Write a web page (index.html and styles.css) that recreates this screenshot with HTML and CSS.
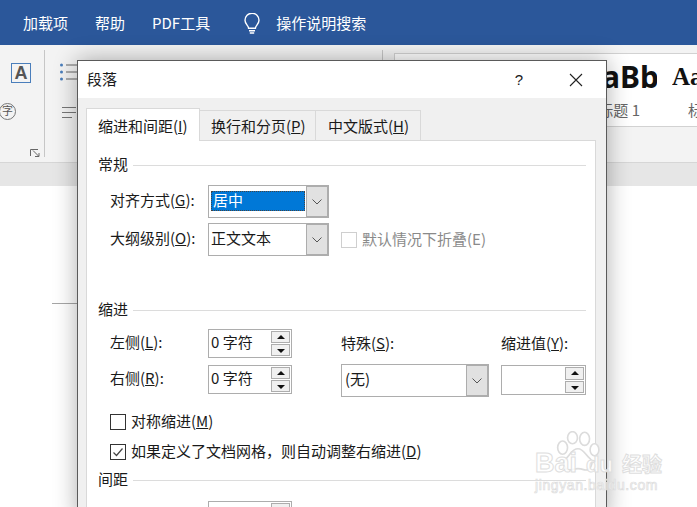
FILE: index.html
```html
<!DOCTYPE html>
<html lang="zh">
<head>
<meta charset="utf-8">
<title>段落</title>
<link rel="stylesheet" href="styles.css">
</head>
<body>
<div class="app">
  <header class="menubar">
    <span class="menu m1">加载项</span>
    <span class="menu m2">帮助</span>
    <span class="menu m3">PDF工具</span>
    <svg class="bulb" width="18" height="22" viewBox="0 0 18 22" fill="none" stroke="#fff" stroke-width="1.4"><path d="M5.6 15.2c0-2.6-3.6-4-3.6-8A7 7 0 0 1 16 7.2c0 4-3.6 5.400-3.600 8z"/><path d="M6 17.700h6M6.800 20h4.400"/></svg>
    <span class="menu m4">操作说明搜索</span>
  </header>
  <section class="ribbon">
    <div class="rib-col1">
      <span class="a-box">A</span>
      <span class="zi">字</span>
      <svg class="launcher" width="10" height="8" viewBox="0 0 10 8" fill="none" stroke="#666"><path d="M.5 7V.5H8"/><path d="M3 1.500L8.500 7M9 4v3.500H5"/></svg>
    </div>
    <div class="rib-sep"></div>
    <div class="rib-col2">
      <svg class="bullets" width="24" height="20" viewBox="0 0 24 20"><g fill="#4a7ebb"><circle cx="1.500" cy="3" r="1.500"/><circle cx="1.500" cy="10" r="1.500"/><circle cx="1.500" cy="17" r="1.500"/></g><path d="M6 3h18M6 10h18M6 17h18" stroke="#666"/></svg>
      <svg class="align" width="14" height="11" viewBox="0 0 14 11"><path d="M0 .5h14M0 5.500h14M0 10.500h10" stroke="#777"/></svg>
    </div>
    <div class="rib-sep"></div>
    <div class="gallery">
      <div class="style-item first"><span class="big">AaBb</span><span class="cap">标题 1</span></div>
      <div class="style-item second"><span class="big serif">AaBbC</span><span class="cap">标题</span></div>
    </div>
  </section>
  <div class="docband"></div>
  <main class="doc"><div class="mark"></div></main>

  <div class="dialog">
    <div class="dlg-title">
      <span class="dlg-name">段落</span>
      <span class="help">?</span>
      <svg class="close" width="14" height="14" viewBox="0 0 14 14" stroke="#222" stroke-width="1.100"><path d="M1 1l12 12M13 1L1 13"/></svg>
    </div>
    <div class="dlg-body">
      <div class="tabs">
        <span class="tab active">缩进和间距(<u>I</u>)</span>
        <span class="tab t2">换行和分页(<u>P</u>)</span>
        <span class="tab t3">中文版式(<u>H</u>)</span>
      </div>
      <div class="panel">
        <div class="heading"><span>常规</span><i></i></div>
        <div class="general">
          <label>对齐方式(<u>G</u>):</label>
          <div class="combo w121"><span class="value"><span class="selected">居中</span></span><span class="drop"><svg width="10" height="6" viewBox="0 0 10 6" fill="none" stroke="#555"><path d="M.5.500L5 5 9.500.500"/></svg></span></div>
          <span></span>
          <label>大纲级别(<u>O</u>):</label>
          <div class="combo w121"><span class="value"><span>正文文本</span></span><span class="drop"><svg width="10" height="6" viewBox="0 0 10 6" fill="none" stroke="#555"><path d="M.5.500L5 5 9.500.500"/></svg></span></div>
          <div class="check disabled"><span class="box"></span><span class="check-text">默认情况下折叠(E)</span></div>
        </div>
        <div class="heading h-indent"><span>缩进</span><i></i></div>
        <div class="indent">
          <div class="indent-left">
            <label>左侧(<u>L</u>):</label>
            <div class="spin"><span class="spin-val">0 字符</span><span class="btns"><b class="up"></b><b class="down"></b></span></div>
            <label>右侧(<u>R</u>):</label>
            <div class="spin"><span class="spin-val">0 字符</span><span class="btns"><b class="up"></b><b class="down"></b></span></div>
          </div>
          <div class="col-special">
            <label>特殊(<u>S</u>):</label>
            <div class="combo w148"><span class="value"><span>(无)</span></span><span class="drop"><svg width="10" height="6" viewBox="0 0 10 6" fill="none" stroke="#555"><path d="M.5.500L5 5 9.500.500"/></svg></span></div>
          </div>
          <div class="col-value">
            <label>缩进值(<u>Y</u>):</label>
            <div class="spin wide"><span class="spin-val"></span><span class="btns"><b class="up"></b><b class="down"></b></span></div>
          </div>
        </div>
        <div class="checks">
          <div class="check"><span class="box"></span><span class="check-text">对称缩进(<u>M</u>)</span></div>
          <div class="check"><span class="box"><svg width="14" height="14" viewBox="0 0 14 14" fill="none" stroke="#444" stroke-width="1.200"><path d="M2.500 7.500l3 3 6-7"/></svg></span><span class="check-text">如果定义了文档网格，则自动调整右缩进(<u>D</u>)</span></div>
        </div>
        <div class="heading h-space"><span>间距</span><i></i></div>
        <div class="spacing"><div class="spin"><span class="spin-val">0 行</span><span class="btns"><b class="up"></b><b class="down"></b></span></div></div>
      </div>
    </div>
  </div>

  <div class="watermark">
    <svg class="paw" width="44" height="42" viewBox="0 0 40 38" fill="#fff" stroke="#dcdcdc" stroke-width="1.500"><ellipse cx="6" cy="15" rx="4.500" ry="6"/><ellipse cx="15" cy="6" rx="4.500" ry="5.500"/><ellipse cx="26" cy="7" rx="4.500" ry="6"/><ellipse cx="35" cy="17" rx="4" ry="5.500"/><path d="M20 16c5 0 7 6 11 9 4 4 0 12-6 10-3-1-7-1-10 0-7 2-10-6-6-10 4-3 5-9 11-9z"/></svg>
    <div class="wm-main">Bai<span class="wm-du">du</span><span class="wm-cn">经验</span></div>
    <div class="wm-sub">jingyan.baidu.com</div>
  </div>
</div>
</body>
</html>
```
FILE: styles.css
```css
* { box-sizing: border-box; }
html, body { margin: 0; padding: 0; }
body { font-family: "Noto Sans CJK SC", "Noto Sans", sans-serif; font-size: 15px; color: #1a1a1a; background: #fff; }
.app { position: relative; width: 697px; height: 507px; overflow: hidden; display: flex; flex-direction: column; }
u { text-underline-offset: 1px; }
label { display: block; padding-bottom: 4px; }

.menubar { height: 45px; flex: none; background: #2b579a; color: #fff; display: flex; align-items: center; font-size: 15px; padding-left: 23px; }
.menu { line-height: 20px; }
.m2 { margin-left: 27px; }
.m3 { margin-left: 27px; }
.bulb { margin-left: 33px; margin-top: 2px; }
.m4 { margin-left: 15px; }

.ribbon { height: 118px; flex: none; background: #f3f3f3; border-bottom: 1px solid #d6d6d6; display: flex; }
.rib-col1 { position: relative; width: 44px; flex: none; }
.a-box { position: absolute; left: 11px; top: 18px; width: 20px; height: 20px; border: 1px solid #4a7ebb; color: #555; font: bold 18px/18px "Liberation Sans", sans-serif; text-align: center; }
.zi { position: absolute; left: -1px; top: 58px; width: 17px; height: 17px; border: 1px solid #777; border-radius: 50%; font-size: 11px; line-height: 13px; text-align: center; color: #555; }
.launcher { position: absolute; left: 30px; top: 104px; }
.rib-sep { width: 1px; margin-top: 5px; height: 107px; background: #c6c6c6; flex: none; }
.rib-col2 { position: relative; width: 337px; flex: none; }
.bullets { position: absolute; left: 15px; top: 17px; }
.align { position: absolute; left: 17px; top: 62px; }
.gallery { margin: 8px 0 0 11px; flex: 1; min-width: 0; height: 74px; background: #fff; border: 1px solid #d2d2d2; border-right: 0; display: flex; padding-left: 133px; overflow: hidden; }
.style-item { display: flex; flex-direction: column; overflow: hidden; flex: none; }
.first { width: 129px; align-items: flex-end; }
.second { margin-left: 15px; width: 60px; }
.big { font: bold 30px/40px "Noto Sans", sans-serif; color: #111; white-space: nowrap; margin: 3px -2px 0 0; height: 40px; }
.serif { font: bold 25px/40px "Liberation Serif", serif; margin-right: 0; }
.cap { font-size: 15px; line-height: 20px; color: #666; white-space: nowrap; margin-top: 3px; }
.first .cap { margin-right: 17px; }
.second .cap { margin-left: 16px; }

.docband { height: 23px; flex: none; background: #e6e6e6; }
.doc { flex: 1; background: #fff; position: relative; }
.mark { position: absolute; left: 52px; top: 117px; width: 26px; height: 1px; background: #a6a6a6; }

.dialog { position: absolute; left: 77px; top: 60px; width: 530px; height: 460px; background: #f0f0f0; border: 1px solid #5a5a5a; box-shadow: 0 0 22px rgba(0,0,0,.32); display: flex; flex-direction: column; }
.dlg-title { height: 37px; flex: none; background: #fff; display: flex; align-items: center; padding-left: 9px; }
.dlg-name { padding-bottom: 3px; }
.help { margin-left: auto; margin-right: 46px; font: 15px "Liberation Sans", sans-serif; }
.close { margin-right: 23px; }
.dlg-body { flex: 1; padding: 10px 10px 0 8px; display: flex; flex-direction: column; }
.tabs { display: flex; align-items: flex-end; height: 32px; flex: none; position: relative; z-index: 1; }
.tab { height: 30px; line-height: 29px; padding: 0 11px; border: 1px solid #d9d9d9; border-left: 0; border-bottom: 0; background: #f0f0f0; white-space: nowrap; }
.tab.active { height: 33px; line-height: 34px; width: 114px; background: #fff; border-left: 1px solid #d9d9d9; margin-bottom: -1px; }
.t2 { width: 116px; padding-left: 11px; }
.t3 { width: 105px; padding-left: 12px; }
.panel { flex: 1; background: #fff; border: 1px solid #d9d9d9; padding: 14px 9px 0 11px; }

.heading { display: flex; align-items: center; height: 20px; gap: 5px; line-height: 20px; }
.heading span { padding-bottom: 3px; }
.heading i { flex: 1; height: 1px; background: #dcdcdc; }
.general { display: grid; grid-template-columns: 98px 121px auto; grid-auto-rows: 33px; row-gap: 5px; margin: 10px 0 0 12px; align-items: center; }
.combo { display: flex; height: 33px; border: 1px solid #adadad; background: #fff; border-right: 2px solid #adadad; }
.w121 { width: 121px; }
.w148 { width: 148px; }
.value { flex: 1; padding: 0 3px 4px; display: flex; align-items: center; }
.general .value { padding: 0 1px 0 2px; }
.general .value > span:not(.selected) { padding-bottom: 4px; }
.selected { display: block; width: 100%; height: 20px; line-height: 17px; background: #0078d7; color: #fff; padding-left: 2px; outline: 1px dotted #444; outline-offset: -1px; margin-top: -1px; }
.drop { width: 21px; background: #e1e1e1; border-left: 1px solid #adadad; border-top: 1px solid #adadad; border-bottom: 1px solid #adadad; display: flex; align-items: center; justify-content: center; }

.check { display: flex; align-items: center; gap: 5px; white-space: nowrap; height: 18px; line-height: 18px; }
.check-text { padding-bottom: 2px; }
.box { width: 16px; height: 16px; flex: none; border: 1px solid #333; background: #fff; display: flex; align-items: center; justify-content: center; }
.disabled { margin-left: 12px; color: #8a8a8a; }
.disabled .box { border-color: #cfcfcf; }

.h-indent { margin-top: 44px; }
.indent { display: flex; margin: 9px 0 0 12px; }
.indent-left { display: grid; grid-template-columns: 98px 84px; grid-template-rows: 29px 29px; row-gap: 7px; align-items: center; width: 231px; flex: none; }
.spin { display: flex; width: 84px; height: 29px; border: 1px solid #adadad; background: #fff; padding: 1px; }
.spin-val { flex: 1; padding-left: 1px; line-height: 22px; }
.btns { width: 19px; display: flex; flex-direction: column; gap: 1px; flex: none; }
.btns b { flex: 1; background: #f0f0f0; border: 1px solid #adadad; position: relative; }
.btns b::after { content: ""; position: absolute; left: 5px; border-left: 4px solid transparent; border-right: 4px solid transparent; }
.up::after { top: 3px; border-bottom: 4px solid #111; }
.down::after { top: 4px; border-top: 4px solid #111; }
.col-special { width: 160px; padding-top: 5px; flex: none; }
.col-special label, .col-value label { line-height: 20px; height: 20px; padding: 0; margin-top: -1px; }
.col-special .combo { margin-top: 11px; }
.col-value { padding-top: 5px; }
.col-value .spin { margin-top: 12px; width: 85px; height: 30px; }

.checks { display: flex; flex-direction: column; gap: 12px; margin: 16px 0 0 12px; }
.h-space { margin-top: 9px; }
.spacing { margin: 11px 0 0 110px; }

.watermark { position: absolute; left: 534px; top: 431px; width: 130px; height: 70px; color: #fff; pointer-events: none; }
.paw { position: absolute; left: 22px; top: 0; }
.wm-main { position: absolute; left: 1px; top: 17px; font: bold 27px/30px "Liberation Sans", sans-serif; -webkit-text-stroke: 1px #dedede; color: rgba(255,255,255,.85); white-space: nowrap; }
.wm-du { font-size: 22px; margin-left: 9px; }
.wm-cn { font: bold 20px/30px "Noto Sans CJK SC", sans-serif; margin-left: 9px; }
.wm-sub { position: absolute; left: 1px; top: 46px; font: 14px/16px "Liberation Sans", sans-serif; color: rgba(255,255,255,.85); -webkit-text-stroke: .7px #dcdcdc; letter-spacing: .6px; white-space: nowrap; }
```
